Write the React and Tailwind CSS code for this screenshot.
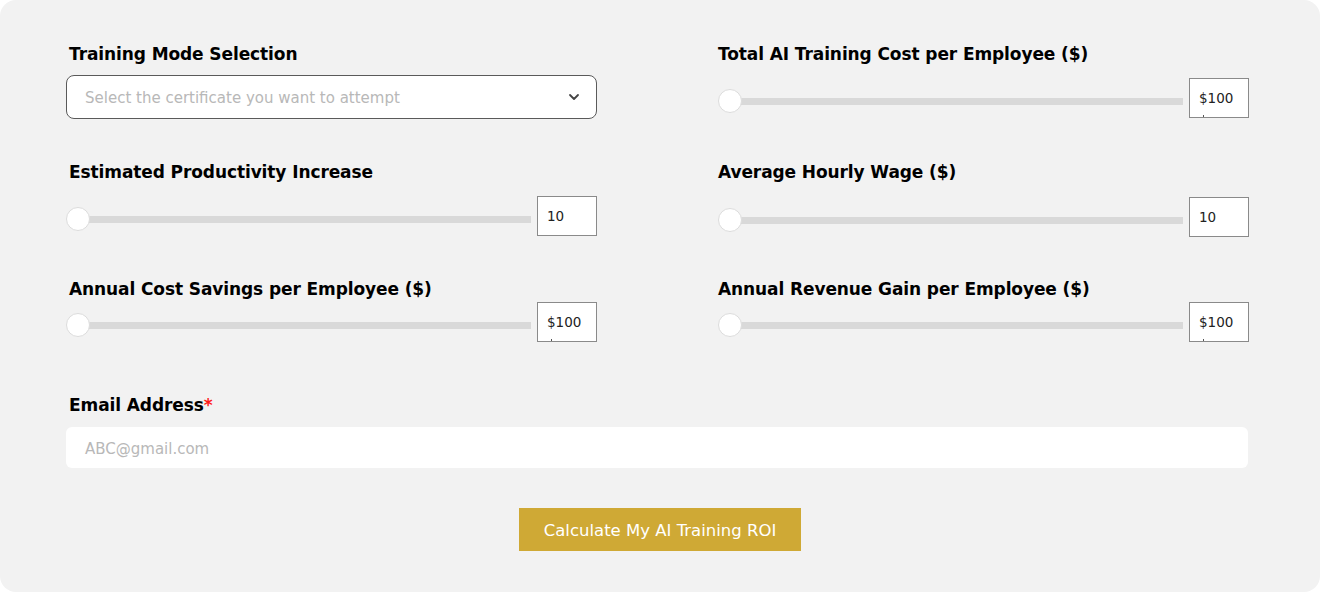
import React from 'react';

const font = { fontFamily: '"DejaVu Sans", "Open Sans", sans-serif' };

// ─── pieces ────────────────────────────────────────────────────────────────

const Label = ({ children, required }) => (
  <p className="h-5 text-[17px] leading-[22px] font-bold text-black tracking-[-0.1px]">
    {children}
    {required && <span className="text-[#ff1a1a]">*</span>}
  </p>
);

const SliderRow = ({ value, className = '' }) => (
  <div className={`flex items-center h-10 ${className}`}>
    <div className="relative top-[3px] flex-1 h-10 flex items-center">
      <div className="ml-3 flex-1 h-[7px] bg-[#d9d9d9]" />
      <div className="absolute left-0 top-1/2 -translate-y-1/2 w-6 h-6 rounded-full bg-white border border-[#dcdcdc]" />
    </div>
    <div className="relative ml-[6px] w-[60px] h-10 bg-white border border-[#8a8a8a] flex items-center pl-[9px] pt-px text-[13.5px] text-[#222]">
      {value}
      {value.startsWith('$') && (
        <span className="absolute left-[13px] bottom-0 w-px h-[2px] bg-[#555]" />
      )}
    </div>
  </div>
);

// ─── page ──────────────────────────────────────────────────────────────────

export default function App() {
  return (
    <div className="w-[1320px] h-[592px] bg-white" style={font}>
      <div className="w-full h-full rounded-2xl bg-[#f2f2f2] pl-[66px] pt-[43px]">
        <div className="grid grid-cols-[531px_531px] gap-x-[121px]">
          {/* Row 1 */}
          <div className="pl-[3px]">
            <Label>Training Mode Selection</Label>
          </div>
          <div>
            <Label>Total AI Training Cost per Employee ($)</Label>
          </div>
          <div className="mt-3 h-[44px] rounded-lg border border-[#5a5a5a] bg-white flex items-center justify-between pl-[18px] pr-[16px]">
            <span className="pt-[2px] text-[15px] text-[#b8b8b8]">
              Select the certificate you want to attempt
            </span>
            <svg width="12" height="8" viewBox="0 0 12 8" fill="none">
              <path d="M2 2l4 4 4-4" stroke="#444" strokeWidth="1.8" strokeLinecap="round" strokeLinejoin="round" />
            </svg>
          </div>
          <SliderRow value="$100" className="mt-[15px]" />

          {/* Row 2 */}
          <div className="pl-[3px] mt-[42px]">
            <Label>Estimated Productivity Increase</Label>
          </div>
          <div className="mt-[42px]">
            <Label>Average Hourly Wage ($)</Label>
          </div>
          <SliderRow value="10" className="mt-[15px]" />
          <SliderRow value="10" className="mt-[16px]" />

          {/* Row 3 */}
          <div className="pl-[3px] mt-[41px]">
            <Label>Annual Cost Savings per Employee ($)</Label>
          </div>
          <div className="mt-[41px]">
            <Label>Annual Revenue Gain per Employee ($)</Label>
          </div>
          <SliderRow value="$100" className="mt-1" />
          <SliderRow value="$100" className="mt-1" />
        </div>

        {/* Email */}
        <div className="mt-[52px] pl-[3px]">
          <Label required>Email Address</Label>
        </div>
        <div className="mt-[13px] w-[1182px] h-[41px] rounded-md bg-white flex items-center pl-[19px]">
          <span className="pt-[3px] text-[15px] text-[#b8b8b8]">ABC@gmail.com</span>
        </div>

        <div className="w-[1188px] flex justify-center mt-[40px]">
          <button className="w-[282px] h-[43px] pt-[3px] bg-[#cfa935] text-white text-[16.5px]">
            Calculate My AI Training ROI
          </button>
        </div>
      </div>
    </div>
  );
}
